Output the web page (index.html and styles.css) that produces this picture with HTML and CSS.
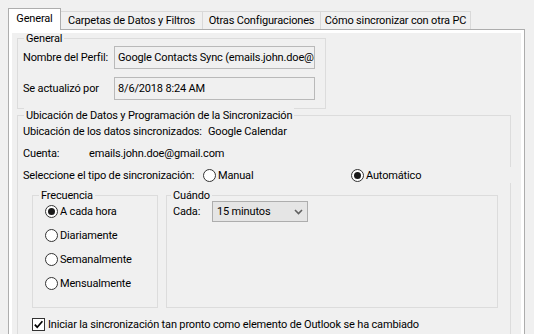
FILE: index.html
```html
<!DOCTYPE html>
<html lang="es">
<head>
<meta charset="utf-8">
<title>General</title>
<link rel="stylesheet" href="styles.css">
</head>
<body>
<div class="window">
  <div class="tabs">
    <div class="tab tab-active w-general">General</div>
    <div class="tab w-carpetas">Carpetas de Datos y Filtros</div>
    <div class="tab w-otras">Otras Configuraciones</div>
    <div class="tab w-como">Cómo sincronizar con otra PC</div>
  </div>
  <div class="panel">
    <div class="page">
      <div class="group g-general">
        <div class="group-title">General</div>
        <div class="field-row">
          <span class="field-label">Nombre del Perfil:</span>
          <div class="field">Google Contacts Sync (emails.john.doe@gmail.com)</div>
        </div>
        <div class="field-row field-row-2">
          <span class="field-label">Se actualizó por</span>
          <div class="field">8/6/2018 8:24 AM</div>
        </div>
      </div>

      <div class="group g-sync">
        <div class="group-title">Ubicación de Datos y Programación de la Sincronización</div>
        <div class="info-row first">
          <span class="loc-label">Ubicación de los datos sincronizados:</span>
          <span>Google Calendar</span>
        </div>
        <div class="info-row">
          <span class="acct-label">Cuenta:</span>
          <span>emails.john.doe@gmail.com</span>
        </div>
        <div class="info-row type-row">
          <span class="type-label">Seleccione el tipo de sincronización:</span>
          <span class="option opt-manual"><span class="radio"></span>Manual</span>
          <span class="option"><span class="radio checked"></span>Automático</span>
        </div>

        <div class="subgroups">
          <div class="group g-freq">
            <div class="group-title">Frecuencia</div>
            <div class="radio-list">
              <span class="option"><span class="radio checked"></span>A cada hora</span>
              <span class="option"><span class="radio"></span>Diariamente</span>
              <span class="option"><span class="radio"></span>Semanalmente</span>
              <span class="option"><span class="radio"></span>Mensualmente</span>
            </div>
          </div>
          <div class="group g-when">
            <div class="group-title">Cuándo</div>
            <div class="when-row">
              <span class="when-label">Cada:</span>
              <div class="combo">
                <span>15 minutos</span>
                <svg class="chev" width="9" height="6" viewBox="0 0 9 6"><path d="M1 1 L4.5 4.5 L8 1" fill="none" stroke="#606060" stroke-width="1.6"/></svg>
              </div>
            </div>
          </div>
        </div>

        <div class="check-row">
          <span class="checkbox"><svg width="11" height="11" viewBox="0 0 11 11"><path d="M1.8 5.6 L4.2 8.2 L9.4 2.2" fill="none" stroke="#000" stroke-width="1.7"/></svg></span>
          Iniciar la sincronización tan pronto como elemento de Outlook se ha cambiado
        </div>
      </div>
    </div>
  </div>
</div>
</body>
</html>
```
FILE: styles.css
```css
* { box-sizing: border-box; }

html, body {
  margin: 0;
  padding: 0;
}

body {
  width: 534px;
  height: 334px;
  overflow: hidden;
  background: #f0f0f0;
  color: #000;
  font-family: Roboto, "Noto Sans", sans-serif;
  font-size: 11px;
  line-height: 15px;
  letter-spacing: -0.16px;
}

.window {
  padding: 8px 0 0 8px;
}

/* tabs */
.tabs {
  display: flex;
  align-items: flex-end;
  height: 21px;
}

.tab {
  height: 18px;
  border-top: 1px solid #d9d9d9;
  border-right: 1px solid #d9d9d9;
  background: #f0f0f0;
  text-align: center;
  line-height: 17px;
  white-space: nowrap;
}

.tab-active {
  position: relative;
  z-index: 1;
  height: 22px;
  margin-bottom: -1px;
  border: 1px solid #adadad;
  border-bottom: none;
  background: #ffffff;
  line-height: 19px;
}

.w-general { width: 53px; }
.w-carpetas { width: 142px; }
.w-otras { width: 118px; }
.w-como { width: 150px; }

/* panel */
.panel {
  width: 517px;
  height: 305px;
  border: 1px solid #adadad;
  border-bottom: none;
  background: #ffffff;
  padding: 3px 3px 0 3px;
}

.page {
  height: 100%;
  overflow: hidden;
  background: #f0f0f0;
  padding-top: 5px;
  padding-left: 5px;
}

/* group boxes */
.group {
  border: 1px solid #dcdcdc;
  padding: 0 6px 0 5px;
}

.group-title {
  width: fit-content;
  margin-top: -8px;
  margin-left: 1px;
  padding: 0 2px;
  background: #f0f0f0;
  line-height: 15px;
  white-space: nowrap;
}

.g-general {
  width: 309px;
  padding-bottom: 8px;
}

.field-row {
  display: flex;
  align-items: center;
}

.field-row-2 {
  margin-top: 8px;
}

.field-label {
  width: 91px;
  flex: none;
}

.field {
  width: 201px;
  height: 23px;
  border: 1px solid #b9b9b9;
  padding: 0 3px;
  line-height: 21px;
  white-space: nowrap;
  overflow: hidden;
}

.g-sync {
  width: 494px;
  height: 220px;
  margin-top: 6px;
  border-bottom: none;
}

.info-row {
  display: flex;
  align-items: center;
  height: 16px;
  margin-top: 6px;
  white-space: nowrap;
}

.info-row.first {
  margin-top: 0;
}

.loc-label { width: 185px; flex: none; }
.acct-label { width: 66px; flex: none; }
.type-label { width: 180px; flex: none; }

.type-row {
  margin-right: -10px;
  background: #f0f0f0;
}

.option {
  display: flex;
  align-items: center;
  height: 16px;
  white-space: nowrap;
}

.opt-manual {
  width: 148px;
}

.radio {
  width: 13px;
  height: 13px;
  flex: none;
  margin-right: 2px;
  border: 1px solid #333333;
  border-radius: 50%;
  background: #ffffff;
  display: flex;
  align-items: center;
  justify-content: center;
}

.radio.checked::after {
  content: "";
  width: 7px;
  height: 7px;
  border-radius: 50%;
  background: #1a1a1a;
}

/* sub groups */
.subgroups {
  display: flex;
  gap: 8px;
  margin-top: 12px;
  margin-left: 9px;
}

.g-freq {
  width: 126px;
  height: 113px;
  padding: 0;
}

.g-freq .group-title {
  margin-left: 6px;
}

.radio-list {
  display: flex;
  flex-direction: column;
  gap: 8px;
  margin-left: 12px;
}

.g-when {
  width: 332px;
  height: 113px;
  padding: 0;
}

.g-when .group-title {
  margin-left: 4px;
}

.when-row {
  display: flex;
  align-items: center;
  height: 21px;
  margin-top: -2px;
  margin-left: 6px;
}

.when-label {
  width: 39px;
  flex: none;
}

.combo {
  width: 96px;
  height: 21px;
  border: 1px solid #adadad;
  background: #e5e5e5;
  display: flex;
  align-items: center;
  justify-content: space-between;
  padding: 0 4px 0 4px;
}

.chev {
  display: block;
}

/* checkbox row */
.check-row {
  display: flex;
  align-items: center;
  height: 16px;
  margin-top: 8px;
  margin-left: 9px;
  white-space: nowrap;
}

.checkbox {
  width: 13px;
  height: 13px;
  flex: none;
  margin-right: 3px;
  border: 1px solid #333333;
  background: #ffffff;
  display: flex;
  align-items: center;
  justify-content: center;
}

.checkbox svg {
  display: block;
}
```
